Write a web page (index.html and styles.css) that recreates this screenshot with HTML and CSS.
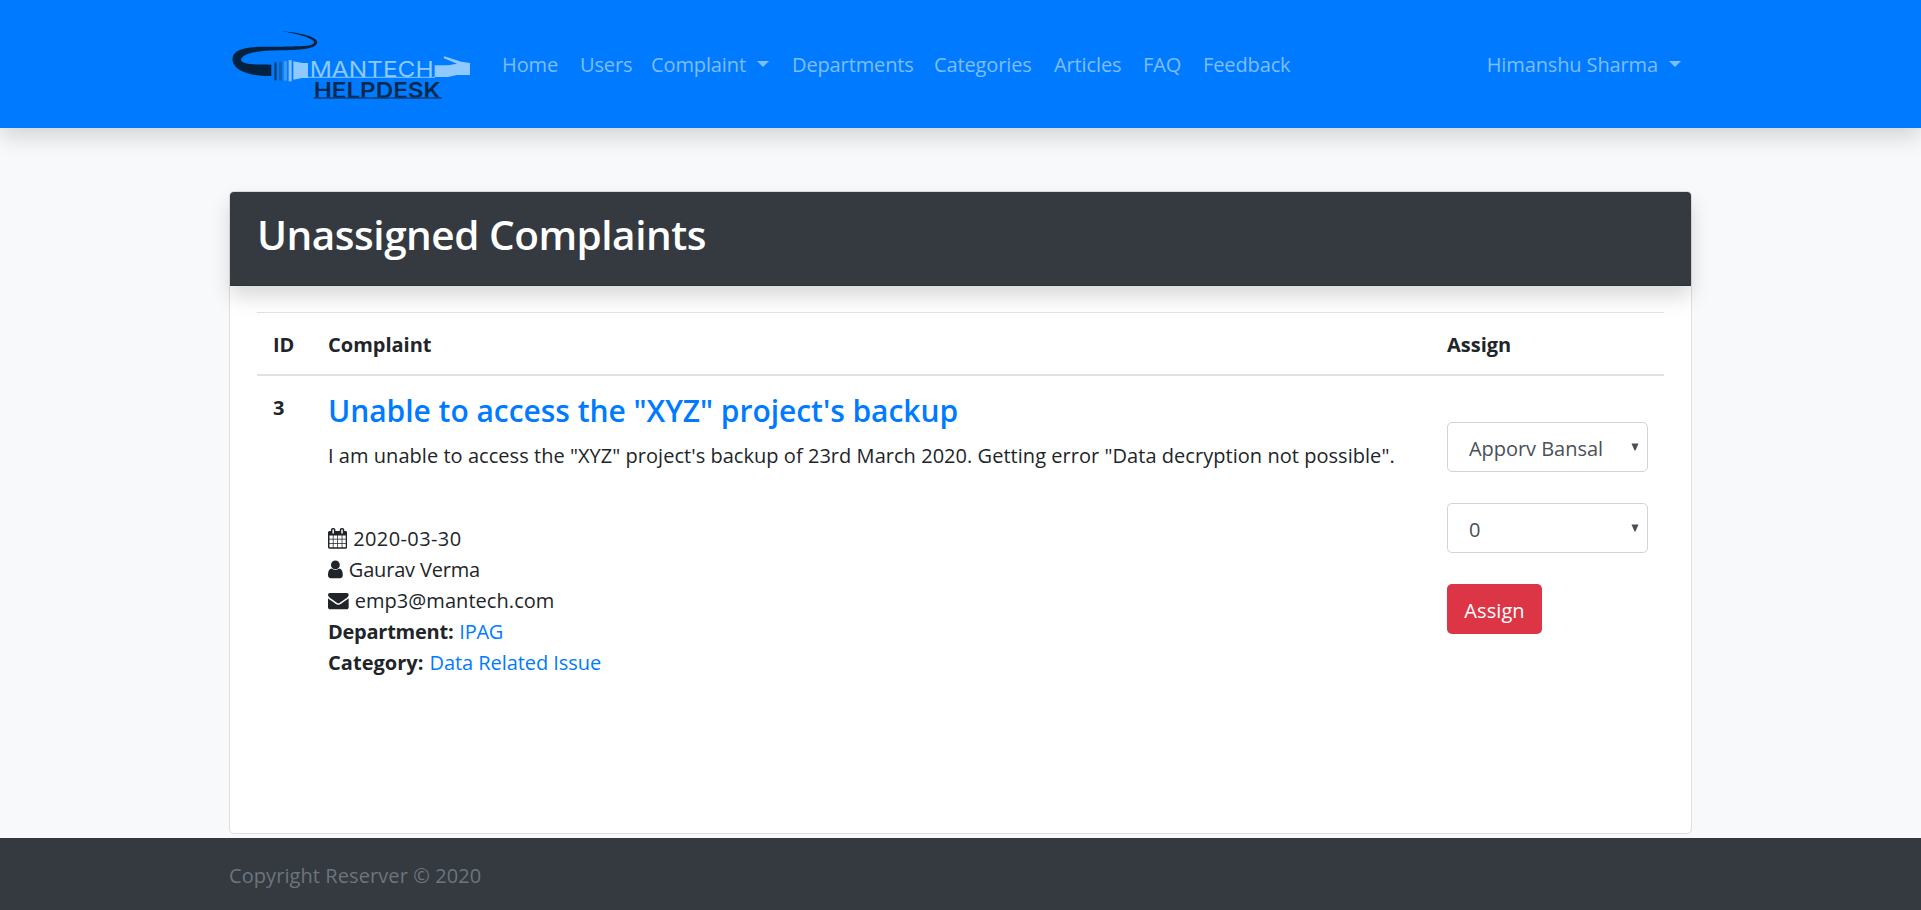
FILE: index.html
```html
<!DOCTYPE html>
<html lang="en">
<head>
<meta charset="utf-8">
<title>Mantech Helpdesk</title>
<link rel="stylesheet" href="styles.css">
</head>
<body>
<header class="navbar">
  <a class="brand">
    <svg class="logo" viewBox="27 0 723 270" width="241" height="90">
      <path d="M184 34C235 37 292 50 292 67C291 88 235 91 175 91C118 92 66 99 63 120C66 134 110 134 154 134V168C112 169 80 162 57 149C33 134 31 107 51 94C82 76 140 81 190 80C242 79 281 80 282 67C281 54 228 40 184 34Z" fill="#03223f"/>
      <path d="M163 127h7v54h-7z" fill="#0b3d72"/>
      <path d="M177 125h9v57h-9z" fill="#1262b4"/>
      <path d="M191 123h10v59h-10z" fill="#3d97f5"/>
      <path d="M206 120h9v64h-9z" fill="#7fc0ff"/>
      <path d="M220 124L247 129H264V174H247L220 179Z" fill="#8ecaff"/>
      <path d="M264 170H645V174H264Z" fill="#6db5fb"/>
      <path d="M644 136H684L711 131L670 114L673 109L724 125L750 129V165H711L684 171H644Z" fill="#8ecaff"/>
      <text class="logo-top" x="269" y="171" textLength="372" lengthAdjust="spacingAndGlyphs">MANTECH</text>
      <text class="logo-bottom" x="281" y="233" textLength="381" lengthAdjust="spacingAndGlyphs">HELPDESK</text>
      <path d="M281 232H665V236H281Z" fill="#063f7c"/>
    </svg>
  </a>
  <nav class="links">
    <a class="l1">Home</a>
    <a class="l2">Users</a>
    <a class="l3">Complaint<i class="caret"></i></a>
    <a class="l4">Departments</a>
    <a class="l5">Categories</a>
    <a class="l6">Articles</a>
    <a class="l7">FAQ</a>
    <a class="l8">Feedback</a>
  </nav>
  <a class="account">Himanshu Sharma<i class="caret"></i></a>
</header>
<main class="card">
  <div class="card-header"><h1>Unassigned Complaints</h1></div>
  <div class="table">
    <div class="row head">
      <div>ID</div><div>Complaint</div><div>Assign</div>
    </div>
    <div class="row">
      <div class="id">3</div>
      <div class="complaint">
        <h3>Unable to access the "XYZ" project's backup</h3>
        <p class="description">I am unable to access the "XYZ" project's backup of 23rd March 2020. Getting error "Data decryption not possible".</p>
        <div class="meta">
          <div class="line"><svg width="19.2" height="20.67" viewBox="64 0 1664 1792"><path d="M192 1664h288v-288h-288v288zm352 0h320v-288h-320v288zm-352-352h288v-320h-288v320zm352 0h320v-320h-320v320zm-352-384h288v-288h-288v288zm736 736h320v-288h-320v288zm-384-736h320v-288h-320v288zm768 736h288v-288h-288v288zm-384-352h320v-320h-320v320zm-352-864v-288q0-13-9.500-22.500t-22.500-9.500h-64q-13 0-22.500 9.500t-9.500 22.500v288q0 13 9.500 22.500t22.500 9.500h64q13 0 22.500-9.500t9.500-22.500zm736 864h288v-320h-288v320zm-384-384h320v-288h-320v288zm384 0h288v-288h-288v288zm32-480v-288q0-13-9.500-22.500t-22.500-9.500h-64q-13 0-22.500 9.500t-9.500 22.500v288q0 13 9.500 22.500t22.500 9.500h64q13 0 22.500-9.500t9.500-22.500zm384-64v1280q0 52-38 90t-90 38h-1408q-52 0-90-38t-38-90v-1280q0-52 38-90t90-38h128v-96q0-66 47-113t113-47h64q66 0 113 47t47 113v96h384v-96q0-66 47-113t113-47h64q66 0 113 47t47 113v96h128q52 0 90 38t38 90z"/></svg><span class="date">2020-03-30</span></div>
          <div class="line"><svg width="14.770" height="20.670" viewBox="256 0 1280 1792"><path d="M1536 1399q0 109-62.500 187t-150.500 78h-854q-88 0-150.500-78t-62.500-187q0-85 8.500-160.500t31.500-152 58.500-131 94-89 134.500-34.500q131 128 313 128t313-128q76 0 134.500 34.500t94 89 58.500 131 31.500 152 8.500 160.500zm-256-887q0 159-112.500 271.500t-271.500 112.500-271.500-112.500-112.500-271.500 112.500-271.500 271.500-112.500 271.500 112.500 112.500 271.500z"/></svg><span class="name">Gaurav Verma</span></div>
          <div class="line"><svg width="20.670" height="20.670" viewBox="0 0 1792 1792"><path d="M1792 710v794q0 66-47 113t-113 47h-1472q-66 0-113-47t-47-113v-794q44 49 101 87 362 246 497 345 57 42 92.500 65.500t94.500 48 110 24.500h2q51 0 110-24.500t94.500-48 92.500-65.500q170-123 498-345 57-39 100-87zm0-294q0 79-49 151t-122 123q-376 261-468 325-10 7-42.500 31t-54 38.500-52 32.500-57.500 27-50 9h-2q-23 0-50-9t-57.500-27-52-32.500-54-38.500-42.500-31q-91-64-262-182.500t-205-142.500q-62-42-117-115.500t-55-136.500q0-78 41.500-130t118.500-52h1472q65 0 112.500 47t47.500 113z"/></svg><span class="mail">emp3@mantech.com</span></div>
          <div class="line"><b class="dept">Department:</b><a class="dept-link">IPAG</a></div>
          <div class="line"><b class="cat">Category:</b><a class="issue">Data Related Issue</a></div>
        </div>
      </div>
      <form class="assign">
        <label class="select"><select><option>Apporv Bansal</option></select><svg width="8" height="8" viewBox="0 0 8 8"><path d="M.5.500h7L4.500 7.500h-1z"/></svg></label>
        <label class="select"><select><option>0</option></select><svg width="8" height="8" viewBox="0 0 8 8"><path d="M.5.500h7L4.500 7.500h-1z"/></svg></label>
        <button type="button">Assign</button>
      </form>
    </div>
  </div>
</main>
<footer class="footer">Copyright Reserver © 2020</footer>
</body>
</html>
```
FILE: styles.css
```css
* { box-sizing: border-box; }
body {
  margin: 0;
  height: 910px;
  overflow: hidden;
  display: flex;
  flex-direction: column;
  background: #f8f9fa;
  color: #212529;
  font: 20px/31px "Open Sans", "Noto Sans", sans-serif;
}
h1, h3, p { margin: 0; }
a { color: #007bff; text-decoration: none; white-space: nowrap; }

.navbar {
  height: 128px;
  flex: none;
  display: flex;
  align-items: flex-start;
  padding: 20px 240px 0 229px;
  background: #007bff;
  box-shadow: 0 10.300px 20.700px rgba(0, 0, 0, .15);
}
.navbar a { color: rgba(255, 255, 255, .5); letter-spacing: -.12px; }
.brand { width: 273px; height: 90px; }
.logo { display: block; }
.logo-top, .logo-bottom { font-family: Inter, Lato, sans-serif; letter-spacing: 0; }
.logo-top { font-size: 63px; fill: #8ecaff; }
.logo-bottom { font-size: 65px; fill: #06294d; font-weight: 600; }
.links { display: flex; padding-top: 29px; }
.l1 { width: 78px; }
.l2 { width: 71px; }
.l3 { width: 141px; }
.l4 { width: 142px; }
.l5 { width: 120px; }
.l6 { width: 89px; }
.l7 { width: 60px; }
.account { margin-left: auto; padding-top: 29px; }
.caret {
  display: inline-block;
  margin-left: 11px;
  vertical-align: 5px;
  border: 6.200px solid transparent;
  border-top-color: currentColor;
  border-bottom: 0;
}

.card {
  width: 1463px;
  height: 643px;
  margin: 63px 0 0 229px;
  flex: none;
  background: #fff;
  border: 1px solid #dfdfdf;
  border-radius: 5px;
}
.card-header {
  height: 94px;
  padding: 18px 27px 0;
  background: #343a40;
  border-bottom: 1px solid #2e3338;
  border-radius: 4px 4px 0 0;
  box-shadow: 0 10.300px 20.700px rgba(0, 0, 0, .15);
}
h1 { color: #fff; font-size: 40.500px; line-height: 50px; font-weight: 600; letter-spacing: -.48px; }
.table { margin: 26px 27px 0; border-top: 1px solid #dee2e6; }
.row {
  display: grid;
  grid-template-columns: 55px 1119px 201px;
  padding: 16px 15px 0 16px;
}
.row.head {
  height: 63px;
  border-bottom: 2px solid #dee2e6;
  font-weight: 700;
}
.id { font-weight: 700; }
.complaint h3 {
  color: #007bff;
  font-size: 30px;
  line-height: 37px;
  font-weight: 600;
  letter-spacing: -.04px;
  white-space: nowrap;
}
.description { margin-top: 11px; white-space: nowrap; letter-spacing: .04px; }
.meta { margin-top: 52px; }
.line { display: flex; height: 31px; white-space: nowrap; }
.line svg { flex: none; margin: 5px 6px 0 0; fill: #212529; }
.line b { margin-right: 6px; }
.date { letter-spacing: .4px; }
.name { letter-spacing: -.18px; }
.mail { letter-spacing: .06px; }
.dept { letter-spacing: -.25px; }
.dept-link { letter-spacing: -.25px; }
.cat { letter-spacing: .04px; }
.issue { letter-spacing: -.06px; }
.assign { padding-top: 30px; }
.select { display: block; position: relative; margin-bottom: 31px; }
.select select {
  display: block;
  appearance: none;
  width: 201px;
  height: 50px;
  padding: 2px 20px 0 21px;
  font: inherit;
  line-height: normal;
  letter-spacing: -.04px;
  color: #495057;
  background: #fff;
  border: 1px solid #ced4da;
  border-radius: 5px;
}
.select svg { position: absolute; right: 9px; top: 21px; fill: #495057; }
button {
  display: block;
  width: 95px;
  height: 50px;
  padding: 2px 0 0;
  font: inherit;
  letter-spacing: .1px;
  color: #fff;
  background: #dc3545;
  border: 0;
  border-radius: 5px;
}
.footer {
  height: 72px;
  margin-top: 4px;
  flex: none;
  padding: 22px 229px 0;
  background: #343a40;
  color: #6c757d;
  letter-spacing: .08px;
}
```
